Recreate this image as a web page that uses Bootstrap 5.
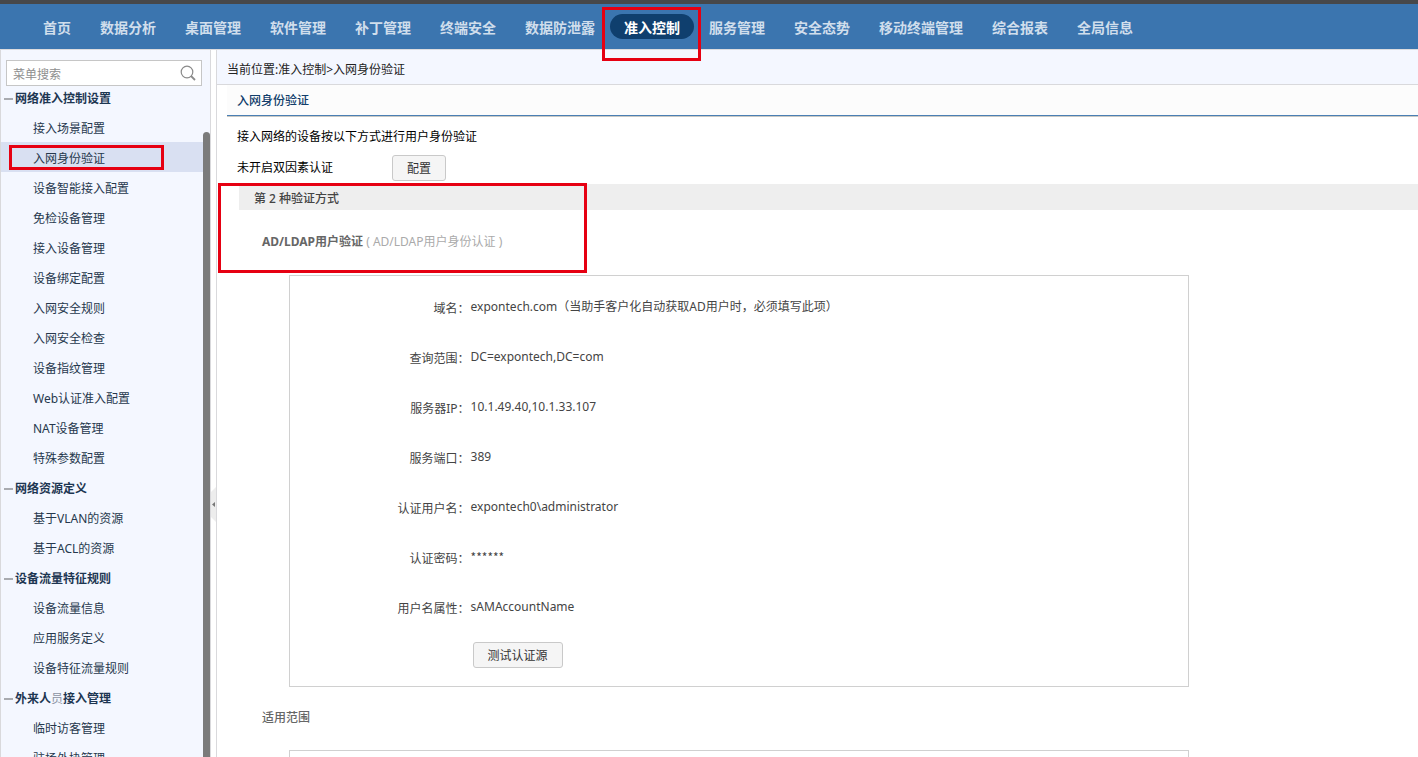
<!DOCTYPE html>
<html lang="zh-CN">
<head>
<meta charset="utf-8">
<meta name="viewport" content="width=device-width, initial-scale=1">
<title>入网身份验证</title>
<link href="https://cdn.jsdelivr.net/npm/bootstrap@5.3.0/dist/css/bootstrap.min.css" rel="stylesheet">
<style>
  body { font: 12px/20px "Noto Sans", "Noto Sans CJK SC", sans-serif; color: #000; background: #fff; }
  a { color: inherit; text-decoration: none; }
  .topbar { background: #3b75af; border-top: 4px solid #47484a; border-bottom: 1px solid #dcdcdf; height: 50px; padding: 10px 28px 0 29px; }
  .topbar .nav-link { position: relative; height: 25px; padding: 0 14px; border-radius: 13px; font-size: 14px; line-height: 27px; font-weight: 700; color: #d0deec; white-space: nowrap; }
  .topbar nav { gap: 1px; }
  .topbar .nav-link.active { background: #0f3f6e; color: #fff; }
  .callout { position: absolute; border: 3px solid #e60012; pointer-events: none; z-index: 5; }
  .callout-nav { inset: -7px -7px -22px -8px; }
  .callout-menu { left: 8px; top: 3px; bottom: 2px; width: 155px; }
  .callout-method { left: -21px; top: -1px; width: 369px; height: 90px; }
  .sidebar { width: 211px; background: #f4f7ff; border: solid #d9d9dc; border-width: 0 1px; padding-top: 10px; }
  .menu-search { margin: 0 8px 0 5px; height: 26px; border: 1px solid #c6c6c6; background: #fff; padding: 0 5px 0 6px; }
  .menu-search input { font-size: 12px; min-width: 0; }
  .menu-search input::placeholder { color: #8e8e8e; }
  .menu-tree { margin-top: -4px; color: #26384d; }
  .menu-tree a, .menu-group { display: block; position: relative; height: 30px; line-height: 33px; }
  .menu-tree a { padding-left: 32px; margin-right: 7px; }
  .menu-tree a.active { background: #d9e0f2; }
  .menu-group { display: flex; align-items: center; gap: 2px; width: 100%; padding: 3px 0 0 3px; border: 0; background: none; font-weight: 700; color: #1d3652; }
  .menu-group::before { content: ""; width: 9px; height: 2px; background: #a9abb0; }
  .menu-group .thin { font-weight: 400; color: #8b93a3; }
  .scroll-thumb { position: absolute; right: 0; top: 82px; bottom: 0; width: 7px; border-radius: 4px 4px 0 0; background: #7b7b7b; }
  .splitter { width: 6px; border-right: 1px solid #d9d9dc; }
  .splitter::before { content: ""; flex: 13 0 0; }
  .splitter::after { content: ""; flex: 7 0 0; }
  .splitter button { height: 35px; border: 0; padding: 0; line-height: 0; background: none; }
  .crumbs { background: #f4f7ff; border-bottom: 1px solid #d9d9dc; height: 35px; padding: 10px 10px 0; color: #222; line-height: 20px; }
  .page-title { margin-left: 10px; height: 32px; padding-left: 10px; background: #fcfcfc; border-bottom: 1px solid #c9c9c4; box-shadow: inset 0 -1px #4a7fb4; font-size: 12px; line-height: 31px; font-weight: 500; color: #123e6b; }
  .intro { padding: 10px 0 0 20px; }
  .factor { width: 155px; }
  .btn-plain { border: 1px solid #c9c9c9; border-radius: 3px; background: #f5f5f5; color: #333; font-size: 12px; line-height: 18px; height: 26px; padding: 4px 14px 2px; }
  .method { position: relative; margin: 3px 0 0 22px; }
  .method-head { background: #eee; height: 26px; line-height: 29px; padding-left: 15px; color: #444; font-size: 12px; }
  .method-name { padding: 22px 0 23px 23px; }
  .method-name strong, .scope { color: #666; }
  .method-name span { color: #aaa; }
  .panel { border: 1px solid #d0d0d0; margin-left: 50px; width: calc(100% - 50px); max-width: 900px; color: #444; }
  .source { padding: 6px 0 18px; }
  .source dl > div { height: 50px; }
  .source dt { width: 20%; font-weight: 400; padding-top: 3px; }
  .source dd { padding-left: 1px; }
  .masked { font-family: "Noto Sans CJK SC", sans-serif; }
  .source .btn-plain { margin: 10px 0 0 calc(20% + 3px); }
  .scope { padding: 21px 0 22px 23px; font-size: 12px; line-height: 20px; font-weight: 500; }
</style>
</head>
<body class="vh-100 d-flex flex-column overflow-hidden">

<header class="topbar flex-shrink-0">
  <nav class="d-flex">
    <a class="nav-link" href="#">首页</a>
    <a class="nav-link" href="#">数据分析</a>
    <a class="nav-link" href="#">桌面管理</a>
    <a class="nav-link" href="#">软件管理</a>
    <a class="nav-link" href="#">补丁管理</a>
    <a class="nav-link" href="#">终端安全</a>
    <a class="nav-link" href="#">数据防泄露</a>
    <a class="nav-link active" href="#" aria-current="page">准入控制<span class="callout callout-nav"></span></a>
    <a class="nav-link" href="#">服务管理</a>
    <a class="nav-link" href="#">安全态势</a>
    <a class="nav-link" href="#">移动终端管理</a>
    <a class="nav-link" href="#">综合报表</a>
    <a class="nav-link" href="#">全局信息</a>
  </nav>
</header>

<div class="d-flex flex-grow-1 overflow-hidden">
  <aside class="sidebar position-relative flex-shrink-0 overflow-hidden">
    <form class="menu-search d-flex align-items-center" role="search">
      <input class="border-0 p-0 pt-1 flex-grow-1 bg-transparent" type="text" placeholder="菜单搜索" aria-label="菜单搜索">
      <button class="border-0 bg-transparent p-0 lh-1" type="button" aria-label="搜索">
        <svg width="16" height="16" viewBox="0 0 16 16" fill="none" stroke="#8a8a8a"><circle cx="7" cy="7" r="5.8" stroke-width="1.2"/><path d="M11 11l4 4" stroke-width="1.8"/></svg>
      </button>
    </form>
    <nav class="menu-tree">
      <button class="menu-group" type="button">网络准入控制设置</button>
      <a href="#">接入场景配置</a>
      <a class="active" href="#">入网身份验证<span class="callout callout-menu"></span></a>
      <a href="#">设备智能接入配置</a>
      <a href="#">免检设备管理</a>
      <a href="#">接入设备管理</a>
      <a href="#">设备绑定配置</a>
      <a href="#">入网安全规则</a>
      <a href="#">入网安全检查</a>
      <a href="#">设备指纹管理</a>
      <a href="#">Web认证准入配置</a>
      <a href="#">NAT设备管理</a>
      <a href="#">特殊参数配置</a>
      <button class="menu-group" type="button">网络资源定义</button>
      <a href="#">基于VLAN的资源</a>
      <a href="#">基于ACL的资源</a>
      <button class="menu-group" type="button">设备流量特征规则</button>
      <a href="#">设备流量信息</a>
      <a href="#">应用服务定义</a>
      <a href="#">设备特征流量规则</a>
      <button class="menu-group" type="button"><span>外来人<span class="thin">员</span>接入管理</span></button>
      <a href="#">临时访客管理</a>
      <a href="#">驻场外协管理</a>
    </nav>
    <div class="scroll-thumb"></div>
  </aside>

  <div class="splitter d-flex flex-column flex-shrink-0">
    <button type="button" aria-label="收起菜单">
      <svg width="5" height="35" viewBox="0 0 5 35"><path d="M5 0L0 5v25l5 5z" fill="#ededed"/><path d="M4 15v5L1 17.500z" fill="#777"/></svg>
    </button>
  </div>

  <main class="flex-grow-1 overflow-x-hidden">
    <div class="crumbs">当前位置:准入控制&gt;入网身份验证</div>
    <h1 class="page-title mb-0">入网身份验证</h1>
    <div class="intro">
      <p class="mb-0">接入网络的设备按以下方式进行用户身份验证</p>
      <div class="d-flex align-items-center mt-2">
        <span class="factor">未开启双因素认证</span>
        <button class="btn-plain" type="button">配置</button>
      </div>
    </div>

    <section class="method">
      <h2 class="method-head mb-0">第 2 种验证方式</h2>
      <div class="method-name"><strong>AD/LDAP用户验证</strong> <span>( AD/LDAP用户身份认证 )</span></div>
      <div class="callout callout-method"></div>
      <div class="panel source">
        <dl class="mb-0">
          <div class="d-flex align-items-center"><dt class="text-end">域名：</dt><dd class="mb-0">expontech.com（当助手客户化自动获取AD用户时，必须填写此项）</dd></div>
          <div class="d-flex align-items-center"><dt class="text-end">查询范围：</dt><dd class="mb-0">DC=expontech,DC=com</dd></div>
          <div class="d-flex align-items-center"><dt class="text-end">服务器IP：</dt><dd class="mb-0">10.1.49.40,10.1.33.107</dd></div>
          <div class="d-flex align-items-center"><dt class="text-end">服务端口：</dt><dd class="mb-0">389</dd></div>
          <div class="d-flex align-items-center"><dt class="text-end">认证用户名：</dt><dd class="mb-0">expontech0\administrator</dd></div>
          <div class="d-flex align-items-center"><dt class="text-end">认证密码：</dt><dd class="mb-0 masked">******</dd></div>
          <div class="d-flex align-items-center"><dt class="text-end">用户名属性：</dt><dd class="mb-0">sAMAccountName</dd></div>
        </dl>
        <button class="btn-plain" type="button">测试认证源</button>
      </div>
      <h3 class="scope mb-0">适用范围</h3>
      <div class="panel source"></div>
    </section>
  </main>
</div>

<script src="https://cdn.jsdelivr.net/npm/bootstrap@5.3.0/dist/js/bootstrap.bundle.min.js"></script>
</body>
</html>
